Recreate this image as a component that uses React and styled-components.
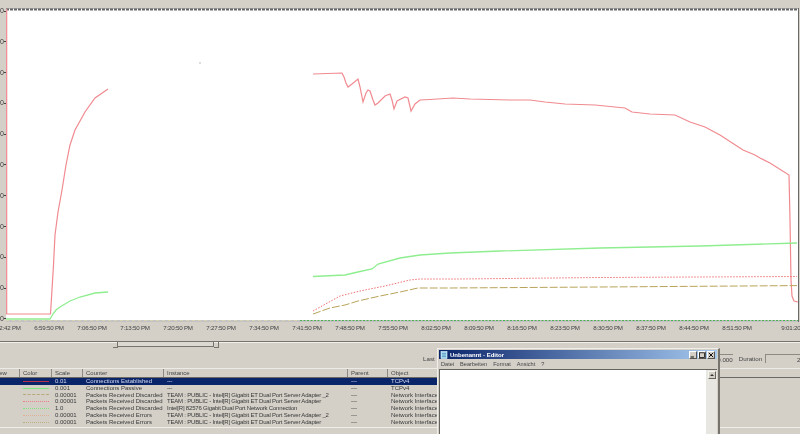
import React from "react";
import styled, { createGlobalStyle } from "styled-components";

const Global = createGlobalStyle`
  html, body { margin: 0; padding: 0; background: #d4d0c8; }
  body { width: 800px; height: 434px; overflow: hidden; font-family: "Liberation Sans", Arial, sans-serif; }
`;

const Page = styled.div`
  position: relative;
  width: 800px;
  height: 434px;
  overflow: hidden;
  display: flex;
  flex-direction: column;
  background: #d4d0c8;
  color: #3a3a3a;
  font-size: 6px;
  filter: blur(0.3px);
`;

const ChartRow = styled.div`
  display: flex;
  height: 314px;
  margin-top: 8px;
`;

const YAxis = styled.div`
  width: 6px;
  display: flex;
  flex-direction: column;
  justify-content: space-between;
  overflow: hidden;
`;

const YTick = styled.div`
  display: flex;
  align-items: center;
  justify-content: flex-end;
  height: 6px;
  line-height: 6px;
  font-size: 7px;
  &::after {
    content: "";
    width: 2px;
    height: 1px;
    background: #444;
    flex: none;
  }
`;

const Plot = styled.svg`
  display: block;
  width: 792px;
  height: 314px;
  background: #fff;
  flex: none;
`;

const RightEdge = styled.div`
  width: 1px;
  background: #6a6a6a;
`;

const TimeAxis = styled.div`
  display: flex;
  height: 17px;
  padding-top: 2px;
  line-height: 8px;
  align-items: flex-start;
  margin-left: -15.5px;
  color: #444;
  font-size: 6.2px;
  letter-spacing: -0.2px;
`;

const TimeLabel = styled.span`
  flex: none;
  width: ${({ $w }) => $w || 43}px;
  text-align: center;
  white-space: nowrap;
`;

const Slider = styled.div`
  display: flex;
  height: 6px;
  border-top: 1px solid #77746e;
  box-shadow: inset 0 1px 0 #f2f0ea;
`;

const SliderHandle = styled.div`
  width: 4px;
  height: 5px;
  margin-left: ${({ $ml }) => $ml || 0}px;
  border-right: 1px solid #77746e;
  border-bottom: 1px solid #77746e;
`;

const SliderWindow = styled.div`
  width: 95px;
  height: 4px;
  border-right: 1px solid #77746e;
  border-bottom: 1px solid #77746e;
  background: #dcd9d2;
`;

const StatsRow = styled.div`
  display: flex;
  align-items: center;
  height: 20px;
  color: #444;
  font-size: 6.2px;
`;

const StatLabel = styled.span`
  margin-left: ${({ $ml }) => $ml}px;
  flex: none;
`;

const StatBox = styled.div`
  flex: none;
  width: ${({ $w }) => $w}px;
  height: 9px;
  line-height: 9px;
  margin-left: 3px;
  padding-left: ${({ $pl }) => $pl || 0}px;
  text-align: ${({ $right }) => ($right ? "right" : "left")};
  border-top: 1px solid #8d8a84;
  border-left: 1px solid #8d8a84;
  white-space: nowrap;
  overflow: hidden;
  box-sizing: border-box;
`;

const TableHead = styled.div`
  display: grid;
  grid-template-columns: 20px 32px 31px 81px 184px 40px 1fr;
  height: 8px;
  line-height: 8px;
  border-top: 1px solid #ecebe5;
  border-bottom: 1px solid #6b6963;
  color: #444;
`;

const HeadCell = styled.div`
  padding-left: 3px;
  border-right: 1px solid #8d8a84;
  overflow: hidden;
  white-space: nowrap;
  &:first-child { padding-left: 0; text-indent: -6px; }
  &:last-child { border-right: none; }
`;

const Rows = styled.div`
  display: flex;
  flex-direction: column;
`;

const Row = styled.div`
  display: grid;
  grid-template-columns: 20px 32px 31px 81px 184px 40px 49px;
  width: 437px;
  height: 6.8px;
  line-height: 6.8px;
  white-space: nowrap;
  background: ${({ $selected }) => ($selected ? "#0a246a" : "transparent")};
  color: ${({ $selected }) => ($selected ? "#d8def0" : "#3a3a3a")};
`;

const Cell = styled.div`
  padding-left: 3px;
  overflow: hidden;
`;

const InstanceCell = styled(Cell)`
  letter-spacing: -0.2px;
`;

const SampleCell = styled.div`
  display: flex;
  align-items: center;
  padding: 0 3px;
`;

const Sample = styled.div`
  width: 26px;
  border-top: 1px ${({ $style }) => $style} ${({ $color }) => $color};
`;

const BottomLine = styled.div`
  height: 0;
  margin-top: 1px;
  border-top: 1px solid #efeee8;
`;

const EditorWindow = styled.div`
  position: absolute;
  left: 437px;
  top: 348px;
  width: 283px;
  height: 90px;
  box-sizing: border-box;
  background: #d4d0c8;
  border-top: 1px solid #efeee8;
  border-left: 1px solid #efeee8;
  border-right: 2px solid #77746e;
  padding: 1px 1px 0;
  display: flex;
  flex-direction: column;
`;

const TitleBar = styled.div`
  display: flex;
  align-items: center;
  height: 9px;
  padding: 0 1px;
  gap: 2px;
  background: linear-gradient(90deg, #0a246a, #a6caf0);
  color: #fff;
  font-weight: bold;
  font-size: 6px;
`;

const TitleText = styled.span`
  flex: 1;
  white-space: nowrap;
`;

const WinButton = styled.div`
  width: 8px;
  height: 8px;
  display: flex;
  align-items: center;
  justify-content: center;
  background: #d4d0c8;
  border: 1px solid;
  border-color: #fff #555 #555 #fff;
  box-sizing: border-box;
`;

const WinButtons = styled.div`
  display: flex;
  gap: 1px;
  margin-right: 1px;
`;

const MenuBar = styled.div`
  display: flex;
  height: 10px;
  align-items: center;
  padding-left: 2px;
  gap: 6px;
  color: #444;
  font-size: 5.6px;
`;

const EditArea = styled.div`
  flex: 1;
  display: flex;
  justify-content: flex-end;
  background: #fff;
  border-top: 1px solid #66645f;
  border-left: 1px solid #66645f;
`;

const ScrollTrack = styled.div`
  width: 11px;
  background: #e8e6e0;
  display: flex;
  justify-content: center;
  padding-top: 1px;
`;

const ScrollArrow = styled.div`
  width: 8px;
  height: 8px;
  box-sizing: border-box;
  background: #d4d0c8;
  border: 1px solid;
  border-color: #f5f5f0 #66645f #66645f #f5f5f0;
  display: flex;
  align-items: center;
  justify-content: center;
  &::after {
    content: "";
    border-left: 2px solid transparent;
    border-right: 2px solid transparent;
    border-bottom: 2px solid #333;
  }
`;

const times = ["6:52:42 PM", "6:59:50 PM", "7:06:50 PM", "7:13:50 PM", "7:20:50 PM", "7:27:50 PM", "7:34:50 PM", "7:41:50 PM", "7:48:50 PM", "7:55:50 PM", "8:02:50 PM", "8:09:50 PM", "8:16:50 PM", "8:23:50 PM", "8:30:50 PM", "8:37:50 PM", "8:44:50 PM", "8:51:50 PM"];

const teamA = "TEAM : PUBLIC - Intel[R] Gigabit ET Dual Port Server Adapter _2";
const teamB = "TEAM : PUBLIC - Intel[R] Gigabit ET Dual Port Server Adapter";
const netIf = "Network Interface";

const rows = [
  { color: "#b8304a", line: "solid", scale: "0.01", counter: "Connections Established", instance: "---", object: "TCPv4", selected: true },
  { color: "#7ee87e", line: "solid", scale: "0.001", counter: "Connections Passive", instance: "---", object: "TCPv4" },
  { color: "#b9a878", line: "dashed", scale: "0.00001", counter: "Packets Received Discarded", instance: teamA, object: netIf },
  { color: "#f08080", line: "dotted", scale: "0.00001", counter: "Packets Received Discarded", instance: teamB, object: netIf },
  { color: "#7ee87e", line: "dotted", scale: "1.0", counter: "Packets Received Discarded", instance: "Intel[R] 82576 Gigabit Dual Port Network Connection", object: netIf },
  { color: "#e0b090", line: "dotted", scale: "0.00001", counter: "Packets Received Errors", instance: teamA, object: netIf },
  { color: "#b8b080", line: "dotted", scale: "0.00001", counter: "Packets Received Errors", instance: teamB, object: netIf },
];

const RED = "#f08a90";
const GREEN = "#8fee8f";

const Chart = () => (
  <Plot viewBox="6 8 792 314">
    <line x1="6" y1="9.5" x2="798" y2="9.5" stroke="#666" strokeWidth="2" strokeDasharray="3 1" />
    <line x1="6" y1="8" x2="798" y2="8" stroke="#666" />
    <line x1="6.5" y1="9" x2="6.5" y2="314" stroke="#ef8f98" strokeWidth="1.6" />
    <path d="M6 321H798" stroke="#888" strokeWidth="1" />
    <path d="M300 320.5H798" stroke="#4caf50" strokeWidth="1" strokeDasharray="2 1.5" />
    <path d="M6 320.5H300" stroke="#d8d2b0" strokeWidth="1" strokeDasharray="3 3" />
    <path d="M6 314H50.5L53.5 265 55 235 58 212 62 190 66 165 70 145 75 130 85 112 95 98 108 89" fill="none" stroke={RED} strokeWidth="1.2" />
    <path d="M313 74L342 73 344 77 346 83 348 87 352 84 358 79 360 87 363 102 366 93 368 90 370 91 373 100 375 105 378 103 385 96 390 94 392 100 394 109 397 101 405 97 408 98 411 111 415 104 420 100 430 99.5 453 98 470 99 510 100 530 100 545 102 565 104 595 105 625 108 632 112 650 114 675 115 690 122 705 127 720 135 743 150 755 155 760 158 770 163 789 175 790 220 791 280 792 296 794 301 798 302" fill="none" stroke={RED} strokeWidth="1.2" />
    <path d="M6 319H50L53 314 56 310 60 307 70 301 80 297 95 293 108 292" fill="none" stroke={GREEN} strokeWidth="1.3" />
    <path d="M313 276.5L345 275 360 271.5 372 269 378 264 400 258 420 255 450 253 500 251 600 248 700 246 797 243" fill="none" stroke={GREEN} strokeWidth="1.3" />
    <path d="M313 311L322 306 340 296 360 291 385 286 410 280 420 279 460 279 600 277.5 797 276.5" fill="none" stroke="#ee7070" strokeDasharray="1.5 1.5" />
    <path d="M313 314L330 308 345 305 358 301 380 296 400 292 418 288 450 288 600 287 797 285.6" fill="none" stroke="#b9a45a" strokeDasharray="8 2" />
    <rect x="199" y="62.5" width="2" height="1" fill="#bbb" />
  </Plot>
);

const NotepadIcon = () => (
  <svg width="8" height="8" viewBox="0 0 8 8">
    <rect x="1" y="0.5" width="6" height="7" fill="#9fd4ee" stroke="#dff" strokeWidth="0.6" />
    <path d="M2 2.5H6M2 4H6M2 5.5H6" stroke="#3a7ca8" strokeWidth="0.5" />
  </svg>
);

const App = () => (
  <Page>
    <Global />
    <ChartRow>
      <YAxis>
        {Array.from({ length: 11 }, (_, i) => (
          <YTick key={i}>0</YTick>
        ))}
      </YAxis>
      <Chart />
      <RightEdge />
    </ChartRow>
    <TimeAxis>
      {times.map((t) => (
        <TimeLabel key={t}>{t}</TimeLabel>
      ))}
      <TimeLabel $w={75}>9:01:20 PM</TimeLabel>
    </TimeAxis>
    <Slider>
      <SliderHandle $ml={113} />
      <SliderWindow />
      <SliderHandle />
    </Slider>
    <StatsRow>
      <StatLabel $ml={423}>Last</StatLabel>
      <StatBox $w={295} $right>0.000</StatBox>
      <StatLabel $ml={6}>Duration</StatLabel>
      <StatBox $w={38} $pl={31}>2:01:00</StatBox>
    </StatsRow>
    <TableHead>
      <HeadCell>View</HeadCell>
      <HeadCell>Color</HeadCell>
      <HeadCell>Scale</HeadCell>
      <HeadCell>Counter</HeadCell>
      <HeadCell>Instance</HeadCell>
      <HeadCell>Parent</HeadCell>
      <HeadCell>Object</HeadCell>
    </TableHead>
    <Rows>
      {rows.map((r, i) => (
        <Row key={i} $selected={r.selected}>
          <Cell />
          <SampleCell>
            <Sample $color={r.color} $style={r.line} />
          </SampleCell>
          <Cell>{r.scale}</Cell>
          <Cell>{r.counter}</Cell>
          <InstanceCell>{r.instance}</InstanceCell>
          <Cell>---</Cell>
          <Cell>{r.object}</Cell>
        </Row>
      ))}
    </Rows>
    <BottomLine />
    <EditorWindow>
      <TitleBar>
        <NotepadIcon />
        <TitleText>Unbenannt - Editor</TitleText>
        <WinButtons>
          <WinButton>
            <svg width="6" height="6" viewBox="0 0 6 6"><path d="M0.5 5H4" stroke="#111" /></svg>
          </WinButton>
          <WinButton>
            <svg width="6" height="6" viewBox="0 0 6 6"><rect x="0.5" y="0.8" width="5" height="4.7" fill="none" stroke="#111" strokeWidth="0.8" /></svg>
          </WinButton>
          <WinButton>
            <svg width="6" height="6" viewBox="0 0 6 6"><path d="M0.8 0.8L5.2 5.2M5.2 0.8L0.8 5.2" stroke="#111" /></svg>
          </WinButton>
        </WinButtons>
      </TitleBar>
      <MenuBar>
        <span>Datei</span>
        <span>Bearbeiten</span>
        <span>Format</span>
        <span>Ansicht</span>
        <span>?</span>
      </MenuBar>
      <EditArea>
        <ScrollTrack>
          <ScrollArrow />
        </ScrollTrack>
      </EditArea>
    </EditorWindow>
  </Page>
);

export default App;
